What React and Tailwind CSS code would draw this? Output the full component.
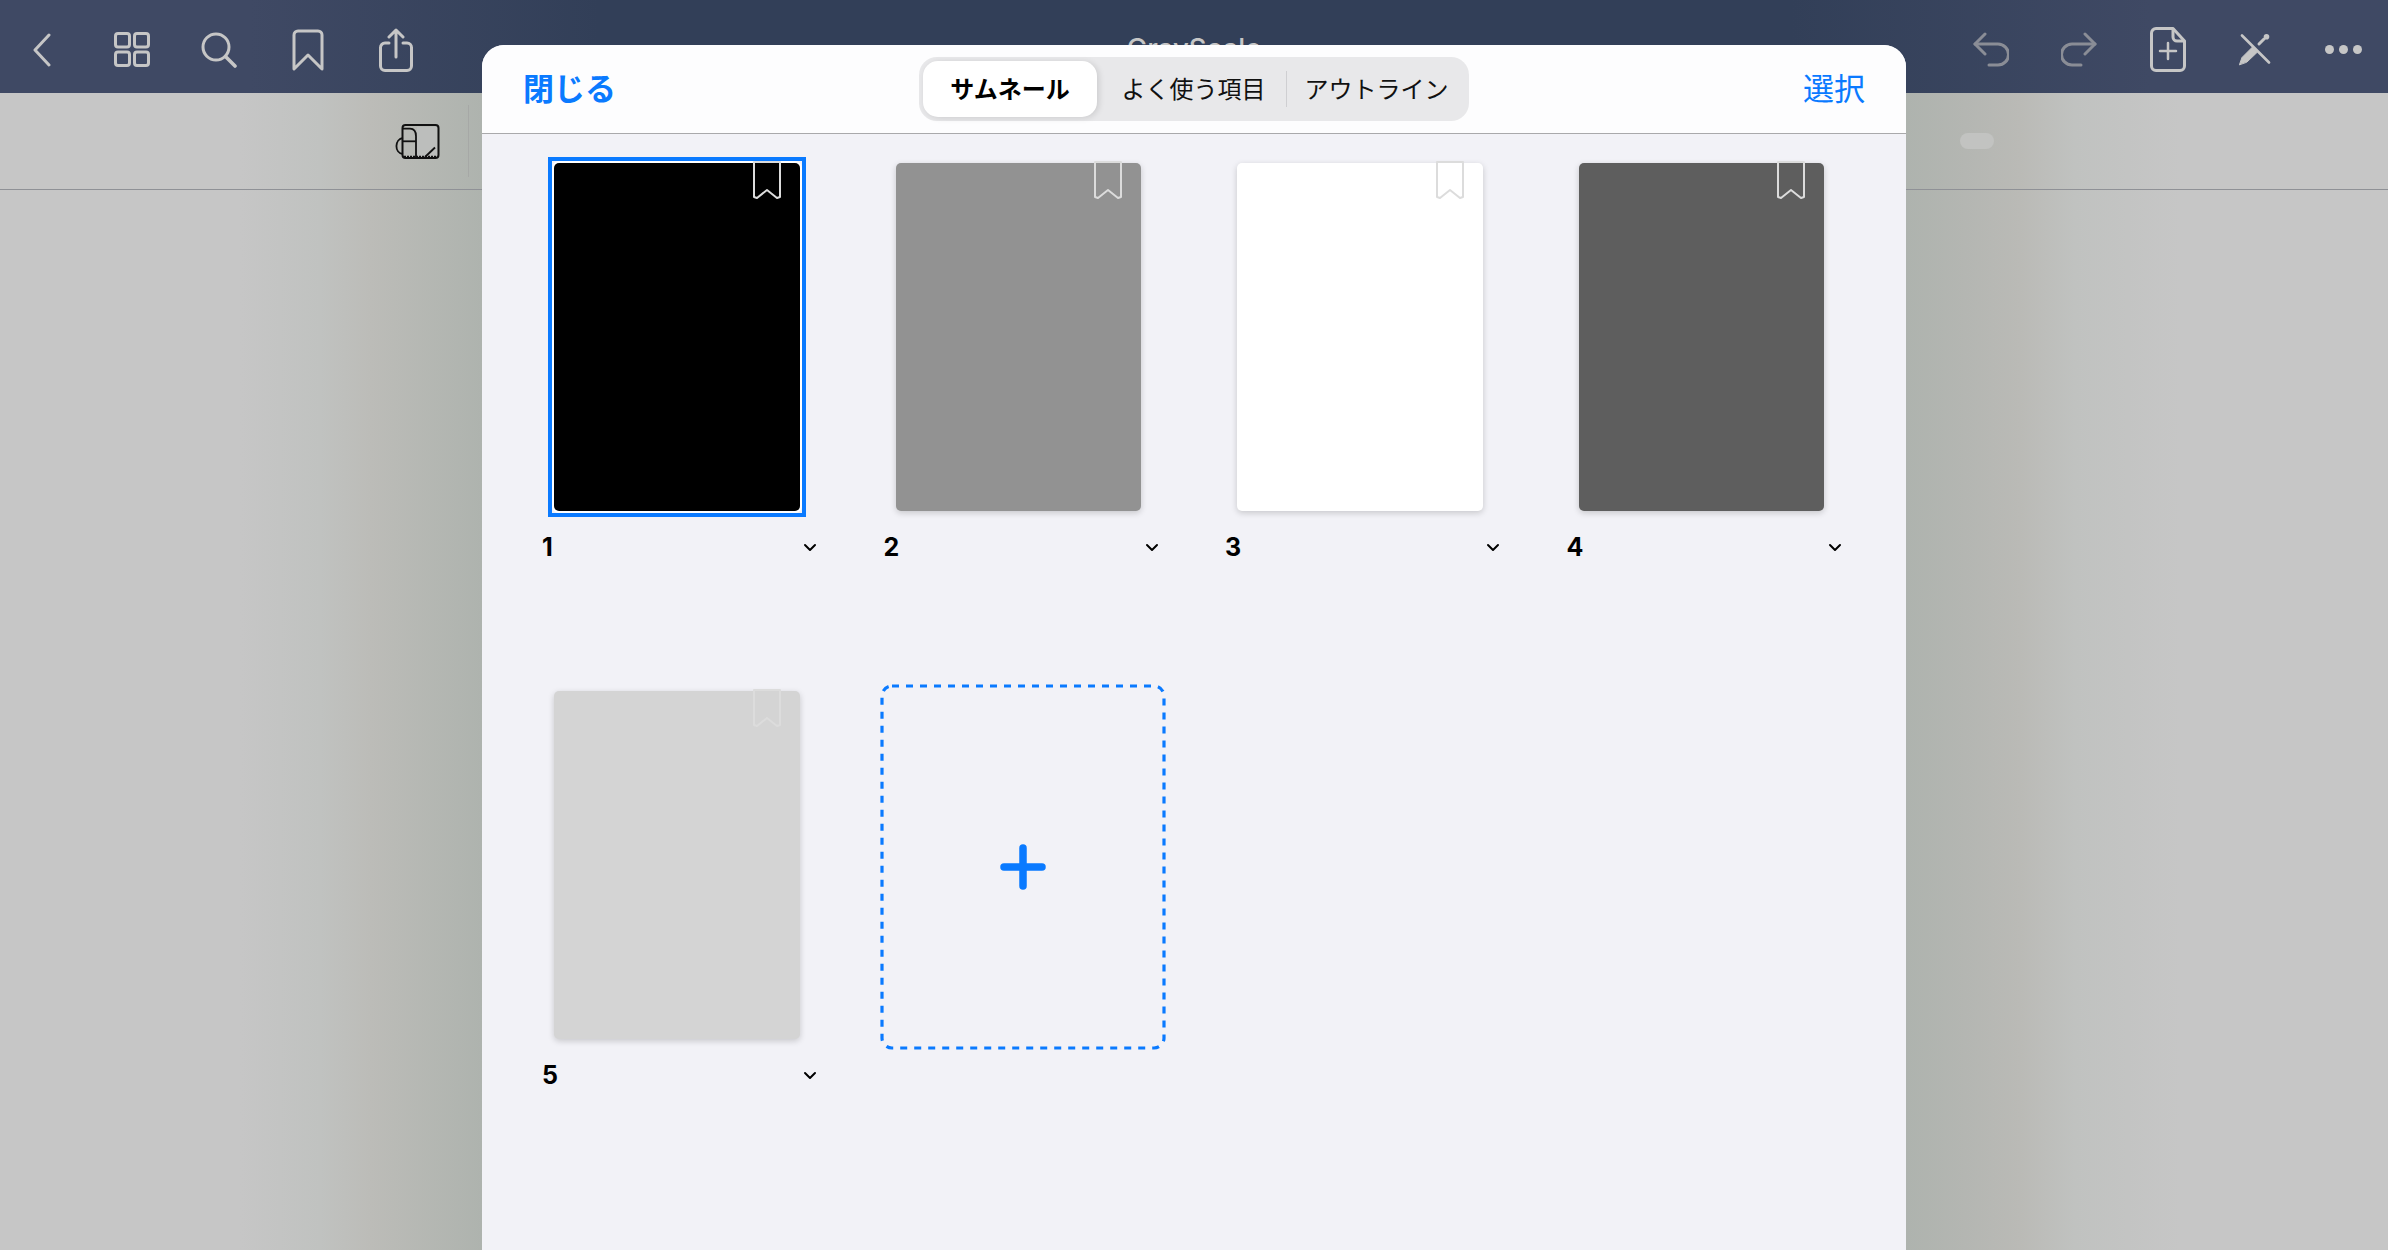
import React from 'react'

const jp = 'font-["Noto_Sans_CJK_JP","Noto_Sans",sans-serif]'

const BackIcon = () => (
    <svg width="19" height="34" viewBox="0 0 19 34" fill="none" stroke="#c6c6c6" strokeWidth="3" strokeLinecap="round" strokeLinejoin="round">
        <path d="M17 2 3 17l14 15" />
    </svg>
)

const GridIcon = () => (
    <svg width="36" height="35" viewBox="0 0 36 35" fill="none" stroke="#c6c6c6" strokeWidth="3">
        <rect x="1.5" y="1.5" width="14" height="13.5" rx="2.5" />
        <rect x="20.5" y="1.5" width="14" height="13.5" rx="2.5" />
        <rect x="1.5" y="20" width="14" height="13.5" rx="2.5" />
        <rect x="20.5" y="20" width="14" height="13.5" rx="2.5" />
    </svg>
)

const SearchIcon = () => (
    <svg width="36" height="36" viewBox="0 0 36 36" fill="none" stroke="#c6c6c6" strokeWidth="3" strokeLinecap="round">
        <circle cx="15" cy="15" r="13" />
        <path d="m24.5 24.5 9.5 9.5" strokeWidth="3.6" />
    </svg>
)

const BookmarkIcon = () => (
    <svg width="32" height="42" viewBox="0 0 32 42" fill="none" stroke="#c6c6c6" strokeWidth="3" strokeLinejoin="round">
        <path d="M2 40V6a4 4 0 0 1 4-4h20a4 4 0 0 1 4 4v34L16 26Z" />
    </svg>
)

const ShareIcon = () => (
    <svg width="34" height="44" viewBox="0 0 34 44" fill="none" stroke="#c6c6c6" strokeWidth="3" strokeLinecap="round" strokeLinejoin="round">
        <path d="M10 15H6a4.5 4.5 0 0 0-4.5 4.5V38A4.5 4.5 0 0 0 6 42.5h22a4.5 4.5 0 0 0 4.5-4.5V19.500A4.500 4.500 0 0 0 28 15h-4" />
        <path d="M17 29V2M10 9l7-7 7 7" />
    </svg>
)

const UndoIcon = ({ flip }) => (
    <svg width="36" height="35" viewBox="0 0 36 35" fill="none" stroke="#8a8d96" strokeWidth="3" strokeLinecap="round" strokeLinejoin="round" className={flip ? '-scale-x-100' : ''}>
        <path d="M12 2 2 12l10 10" />
        <path d="M2 12h23a9.500 9.500 0 0 1 0 21H16" />
    </svg>
)

const AddPageIcon = () => (
    <svg width="36" height="45" viewBox="0 0 36 45" fill="none" stroke="#c6c6c6" strokeWidth="3" strokeLinecap="round" strokeLinejoin="round">
        <path d="M6 1.500h17L34.500 14v25a4.500 4.500 0 0 1-4.500 4.500H6A4.500 4.500 0 0 1 1.500 39V6A4.500 4.500 0 0 1 6 1.500Z" />
        <path d="M23 2v8a4 4 0 0 0 4 4h7" />
        <path d="M18 16v16M10 24h16" strokeWidth="2.500" />
    </svg>
)

const ToolsIcon = () => (
    <svg width="32" height="32" viewBox="0 0 32 32" fill="none" stroke="#c6c6c6" strokeLinecap="round">
        <path d="m3 1.500 27 27" strokeWidth="2.600" />
        <path d="M.5 30.500 3 23.500 13.500 13l5 5L8 28Z" fill="#c6c6c6" strokeWidth="1" strokeLinejoin="round" />
        <path d="m20 10 5-5" strokeWidth="3" />
        <circle cx="27.500" cy="2.800" r="2.800" fill="#c6c6c6" stroke="none" />
    </svg>
)

const DotsIcon = () => (
    <div className="flex gap-[5px]">
        <span className="w-[9px] h-[9px] rounded-full bg-[#c6c6c6]" />
        <span className="w-[9px] h-[9px] rounded-full bg-[#c6c6c6]" />
        <span className="w-[9px] h-[9px] rounded-full bg-[#c6c6c6]" />
    </div>
)

const LayoutIcon = () => (
    <svg width="45" height="35" viewBox="0 0 45 35" fill="none" stroke="#111" strokeWidth="1.800">
        <path d="M22 3h20v29H22Z" fill="#bcbebc" stroke="none" />
        <rect x="7.500" y="1" width="36" height="33" rx="3" strokeWidth="2" />
        <path d="M8 4.700h7c4 0 6 3 6 7.600v21" />
        <path d="M8 17.300h13" />
        <path d="M8 14c-8.500 1-9 15 0 16" />
        <path d="M9 33h33" strokeWidth="2.500" strokeDasharray="2 1" />
        <path d="m30 33 10-9.500" />
    </svg>
)

const PageBookmark = () => (
    <svg width="30" height="40" viewBox="0 0 30 40" fill="none" stroke="#dcdcdc" strokeWidth="2" strokeLinejoin="round" className="absolute -top-[3px] right-[18px]">
        <path d="M2 2h26v35l-3 1-10-8-10 8-3-1Z" />
    </svg>
)

const Chevron = () => (
    <svg width="14" height="9" viewBox="0 0 14 9" fill="none" stroke="#000" strokeWidth="2" strokeLinecap="round" strokeLinejoin="round" className="-mt-[2px]">
        <path d="m2 2 5 5 5-5" />
    </svg>
)

const pages = [
    { num: 1, color: 'bg-black', selected: true },
    { num: 2, color: 'bg-[#929292]' },
    { num: 3, color: 'bg-white' },
    { num: 4, color: 'bg-[#5e5e5e]' },
    { num: 5, color: 'bg-[#d4d4d4]' },
]

const PageThumb = ({ page }) => (
    <div className="pl-[12px]">
        <div className={`relative w-[245.5px] h-[348px] rounded-[5px] ${page.color} ${page.selected ? 'shadow-[0_0_0_2px_#fff]' : 'shadow-[0_2px_6px_rgba(0,0,0,0.18)]'}`}>
            {page.selected && <div className="absolute -inset-[6px] border-4 border-[#0a7aff]" />}
            <PageBookmark />
        </div>
        <div className="flex items-center justify-between w-[275px] h-[32px] mt-[21px] -ml-[12px] text-[25px] font-bold text-black font-['Inter',sans-serif]">
            <span>{page.num}</span>
            <Chevron />
        </div>
    </div>
)

const AddPage = () => (
    <div className="relative -ml-[4px] -mt-[7px] w-[286px] h-[366px] flex items-center justify-center">
        <svg width="286" height="366" fill="none" stroke="#0a7aff" strokeWidth="3.200" strokeDasharray="7 7" strokeLinecap="butt" className="absolute inset-0">
            <rect x="2" y="2" width="282" height="362" rx="10" />
        </svg>
        <svg width="46" height="46" viewBox="0 0 46 46" fill="none" stroke="#0a7aff" strokeWidth="7.500" strokeLinecap="round">
            <path d="M23 4v38M4 23h38" />
        </svg>
    </div>
)

export default function App() {
    return (
        <div className="relative w-[2388px] h-[1250px] overflow-hidden flex flex-col bg-[linear-gradient(90deg,#c6c6c6_0,#c6c6c6_240px,#c0c2c0_320px,#bcbcb8_370px,#aeb3ae_482px,#aeb3ae_1906px,#b4b6b2_1965px,#babab6_2020px,#c0c2c0_2075px,#c6c6c6_2180px)]">
            {/* top bar */}
            <header className="h-[93px] shrink-0 pt-[6px] grid grid-cols-[1fr_auto_1fr] items-center bg-[linear-gradient(90deg,#3f4964_0,#3f4964_250px,#323f58_600px,#323f58_1790px,#3f4964_2150px)]">
                <div className="flex items-center pl-[32px]">
                    <BackIcon />
                    <div className="ml-[63px]"><GridIcon /></div>
                    <div className="ml-[51px]"><SearchIcon /></div>
                    <div className="ml-[55px]"><BookmarkIcon /></div>
                    <div className="ml-[55px]"><ShareIcon /></div>
                </div>
                <div className="text-[27.5px] font-medium text-[#c6c6c6] font-['Inter',sans-serif] -mt-[2px]">GrayScale</div>
                <div className="flex items-center justify-end pr-[26px]">
                    <UndoIcon />
                    <div className="ml-[52px]"><UndoIcon flip /></div>
                    <div className="ml-[53px]"><AddPageIcon /></div>
                    <div className="ml-[53px]"><ToolsIcon /></div>
                    <div className="ml-[54px]"><DotsIcon /></div>
                </div>
            </header>

            {/* toolbar */}
            <div className="h-[97px] shrink-0 border-b border-[#8f9196] flex items-center pl-[395px]">
                <LayoutIcon />
                <div className="ml-[28px] w-px h-[72px] bg-[#a6a8a6]" />
                <div className="ml-[1491px] w-[34px] h-[16px] rounded-full bg-[#c2c3c1]" />
            </div>

            {/* thumbnails sheet */}
            <div className="absolute top-[45px] left-[482px] w-[1424px] bottom-0 rounded-t-[22px] overflow-hidden bg-[#f2f2f7] flex flex-col">
                <div className="h-[89px] shrink-0 bg-[#fdfdfe] border-b border-[#a9a9ab] px-[41px] grid grid-cols-[1fr_auto_1fr] items-center">
                    <button className={`justify-self-start -mt-[3px] text-[31px] font-bold text-[#0a7aff] ${jp}`}>閉じる</button>
                    <div className={`w-[550px] h-[64px] p-[4px] rounded-[18px] bg-[#e8e8ea] flex items-center text-[24px] text-[#111] ${jp}`}>
                        <div className="w-[174px] h-[56px] pb-[2px] rounded-[15px] bg-white shadow-[2px_1px_6px_rgba(0,0,0,0.12)] flex items-center justify-center font-bold text-black">サムネール</div>
                        <div className="w-[191px] pl-[2px] pb-[2px] text-center">よく使う項目</div>
                        <div className="w-px h-[36px] -ml-[2px] bg-[#cfcfd2]" />
                        <div className="flex-1 pb-[2px] pl-[1px] text-center">アウトライン</div>
                    </div>
                    <button className={`justify-self-end -mt-[3px] text-[31px] text-[#0a7aff] ${jp}`}>選択</button>
                </div>

                <div className="pl-[60px] pt-[29px] grid grid-cols-[repeat(4,341.5px)] auto-rows-[528px]">
                    {pages.map((page) => (
                        <PageThumb key={page.num} page={page} />
                    ))}
                    <AddPage />
                </div>
            </div>
        </div>
    )
}
